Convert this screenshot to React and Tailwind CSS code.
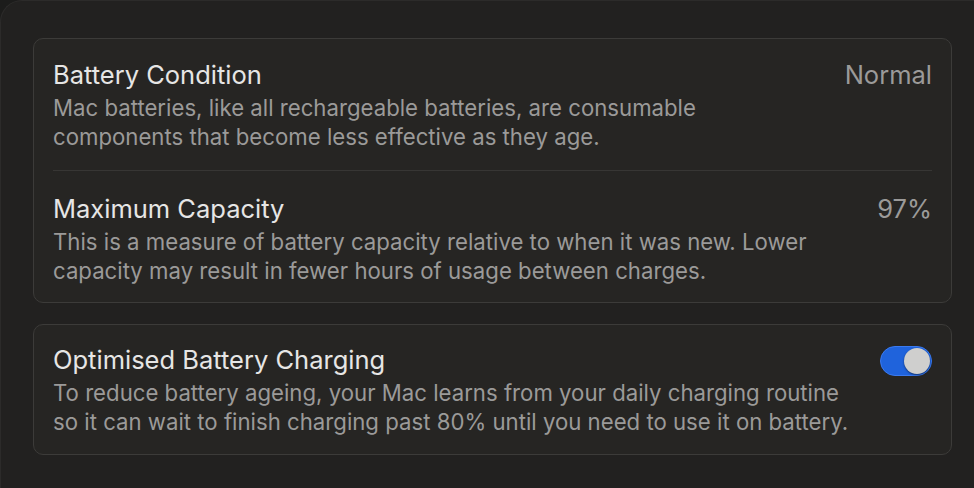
import React, { useState } from 'react';

function Row({ title, desc, right }) {
    return (
        <div className="flex items-start justify-between gap-6">
            <div className="flex flex-col">
                <p className="text-[25.5px] leading-[30px] text-[#e6e6e5]">{title}</p>
                <p className="text-[22.2px] leading-[29px] text-[#9b9a99] mt-[3px]">{desc}</p>
            </div>
            {right}
        </div>
    );
}

function Toggle({ on, onChange }) {
    return (
        <button
            onClick={() => onChange(!on)}
            className={
                'mt-[1px] shrink-0 w-[52px] h-[30px] rounded-full flex items-center px-[1px] border ' +
                (on ? 'bg-[#1f63dc] border-[#3a7af0] justify-end' : 'bg-[#3a3938] border-[#4a4947] justify-start')
            }
        >
            <span className="w-[26px] h-[26px] rounded-full bg-[#cfcfce] shadow-[0_1px_2px_rgba(0,0,0,0.5)]"></span>
        </button>
    );
}

export default function App() {
    const [optimised, setOptimised] = useState(true);

    return (
        <div className="w-[974px] h-[488px] bg-[#1c1c1b] overflow-hidden" style={{ fontFamily: 'Inter, "Noto Sans", sans-serif' }}>
            <div className="w-full h-full bg-[#222120] rounded-tl-[22px] border-t border-l border-[#2c2b2a] pt-[37px] pl-[32px] pr-[22px]">
                <div className="bg-[#262523] border border-[#3c3b39] rounded-[10px] px-[19px] pt-[21px] pb-[17px]">
                    <Row
                        title="Battery Condition"
                        desc={<>Mac batteries, like all rechargeable batteries, are consumable<br />components that become less effective as they age.</>}
                        right={<p className="text-[25.5px] leading-[30px] text-[#9b9a99]">Normal</p>}
                    />
                    <div className="h-px bg-[#373634] mt-[19px] mb-[23px]"></div>
                    <Row
                        title="Maximum Capacity"
                        desc={<>This is a measure of battery capacity relative to when it was new. Lower<br />capacity may result in fewer hours of usage between charges.</>}
                        right={<p className="text-[25.5px] leading-[30px] text-[#9b9a99]">97%</p>}
                    />
                </div>
                <div className="mt-[21px] bg-[#262523] border border-[#3c3b39] rounded-[10px] px-[19px] pt-[20px] pb-[18px]">
                    <Row
                        title="Optimised Battery Charging"
                        desc={<>To reduce battery ageing, your Mac learns from your daily charging routine<br />so it can wait to finish charging past 80% until you need to use it on battery.</>}
                        right={<Toggle on={optimised} onChange={setOptimised} />}
                    />
                </div>
            </div>
        </div>
    );
}
